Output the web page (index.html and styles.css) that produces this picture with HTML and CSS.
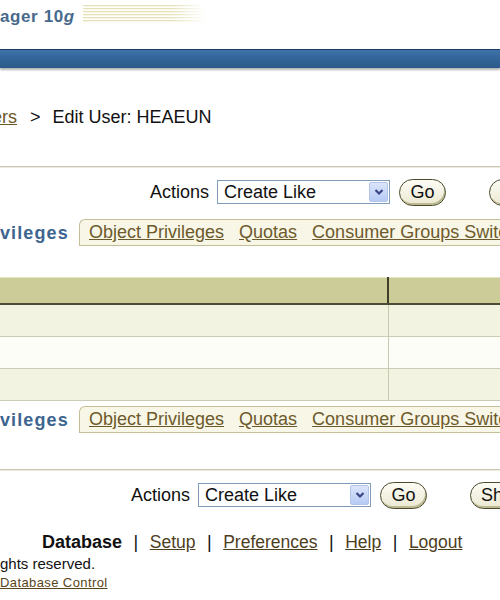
FILE: index.html
```html
<!DOCTYPE html>
<html lang="en">

<head>
    <meta charset="UTF-8">
    <meta name="viewport" content="width=device-width, initial-scale=1.0">
    <title>Edit User: HEAEUN</title>
    <link rel="stylesheet" href="styles.css">
</head>

<body>
    <div class="brand">
        <span class="brand-name">ager 10<i>g</i></span>
        <span class="brand-stripes"></span>
    </div>
    <div class="topbar"></div>

    <div class="crumbs">
        <a href="#">ers</a>
        <span class="crumb-sep">&gt;</span>
        <span>Edit User: HEAEUN</span>
    </div>

    <div class="rule"></div>

    <div class="actions actions-top">
        <label>Actions</label>
        <div class="select-box">
            <span>Create Like</span>
            <span class="select-arrow">
                <svg width="10" height="8" viewBox="0 0 10 8"><path d="M1.5 2 L5 5.5 L8.5 2" fill="none" stroke="#3b4487" stroke-width="2.2"/></svg>
            </span>
        </div>
        <button class="pill">Go</button>
        <button class="pill wide">Revert</button>
    </div>

    <div class="tabs">
        <span class="tab-current">vileges</span>
        <div class="tab-strip">
            <a href="#">Object Privileges</a>
            <a href="#">Quotas</a>
            <a href="#">Consumer Groups Switch</a>
        </div>
    </div>

    <table class="grid">
        <thead>
            <tr><th class="col-a"></th><th></th></tr>
        </thead>
        <tbody>
            <tr class="odd"><td class="col-a"></td><td></td></tr>
            <tr><td class="col-a"></td><td></td></tr>
            <tr class="odd"><td class="col-a"></td><td></td></tr>
        </tbody>
    </table>

    <div class="tabs tabs-bottom">
        <span class="tab-current">vileges</span>
        <div class="tab-strip">
            <a href="#">Object Privileges</a>
            <a href="#">Quotas</a>
            <a href="#">Consumer Groups Switch</a>
        </div>
    </div>

    <div class="rule rule-bottom"></div>

    <div class="actions actions-bottom">
        <label>Actions</label>
        <div class="select-box">
            <span>Create Like</span>
            <span class="select-arrow">
                <svg width="10" height="8" viewBox="0 0 10 8"><path d="M1.5 2 L5 5.5 L8.5 2" fill="none" stroke="#3b4487" stroke-width="2.2"/></svg>
            </span>
        </div>
        <button class="pill">Go</button>
        <button class="pill wide">Show SQL</button>
    </div>

    <div class="footer-links">
        <b>Database</b>
        <span class="sep">|</span>
        <a href="#">Setup</a>
        <span class="sep">|</span>
        <a href="#">Preferences</a>
        <span class="sep">|</span>
        <a href="#">Help</a>
        <span class="sep">|</span>
        <a href="#">Logout</a>
    </div>
    <div class="copyright">ghts reserved.</div>
    <a class="about" href="#">Database Control</a>
</body>

</html>
```

FILE: styles.css
```css
html, body {
    width: 500px;
    overflow: hidden;
}

body {
    margin: 0;
    font-family: "Liberation Sans", Arial, sans-serif;
    font-size: 18px;
    color: #111;
    background: #fff;
}

a {
    color: #6b5628;
}

/* branding strip */
.brand {
    height: 49px;
    display: flex;
    align-items: flex-start;
    box-sizing: border-box;
    padding-top: 5px;
}

.brand-name {
    font-size: 17px;
    font-weight: bold;
    letter-spacing: 0.6px;
    color: #48698c;
    line-height: 20px;
    margin-top: 2px;
    flex: none;
}

.brand-stripes {
    width: 123px;
    height: 17px;
    margin-left: 8px;
    background: repeating-linear-gradient(to bottom, #e4e0b8 0 1px, #f8f6e6 1px 2px, #fff 2px 3px);
    -webkit-mask-image: linear-gradient(to right, #000 70%, transparent);
    mask-image: linear-gradient(to right, #000 70%, transparent);
}

.topbar {
    height: 18px;
    border-top: 1px solid #1b3a63;
    background: linear-gradient(to bottom, #3f72a8, #33669a 40%, #2c5a8a);
    box-shadow: 0 2px 2px rgba(0, 0, 0, 0.3);
}

/* breadcrumb */
.crumbs {
    margin-top: 37px;
    margin-left: -8px;
    line-height: 24px;
    height: 24px;
}

.crumb-sep {
    margin: 0 7px 0 8px;
}

.rule {
    margin-top: 37px;
    border-top: 1px solid #c9c6b3;
    border-bottom: 1px solid #eceadf;
}

.rule-bottom {
    margin-top: 36px;
}

/* action row */
.actions {
    display: flex;
    align-items: center;
    height: 28px;
    margin-top: 10px;
    white-space: nowrap;
}

.actions-top {
    padding-left: 150px;
}

.actions-bottom {
    padding-left: 131px;
}

.actions label {
    margin-right: 8px;
}

.select-box {
    display: flex;
    align-items: center;
    justify-content: space-between;
    flex: none;
    width: 173px;
    height: 24px;
    box-sizing: border-box;
    border: 1px solid #7f9db9;
    padding: 0 1px 0 6px;
    background: #fff;
}

.select-arrow {
    display: flex;
    align-items: center;
    justify-content: center;
    width: 19px;
    height: 20px;
    box-sizing: border-box;
    border: 1px solid #b3c3e6;
    border-radius: 2px;
    background: linear-gradient(to bottom, #dbe5fc, #b7cbf5);
}

.pill {
    flex: none;
    font: inherit;
    color: #111;
    height: 27px;
    width: 47px;
    margin-left: 9px;
    padding: 0;
    border: 1px solid #4a4a2c;
    border-radius: 14px;
    background: linear-gradient(to bottom, #fdfcf5, #ebe8d2);
    box-shadow: inset -1px -2px 0 #bdb993;
}

.pill.wide {
    width: 96px;
    margin-left: 43px;
    text-align: left;
    padding-left: 10px;
}

/* sub tabs */
.tabs {
    display: flex;
    align-items: flex-end;
    height: 28px;
    margin-top: 12px;
    white-space: nowrap;
}

.tabs-bottom {
    margin-top: 4px;
}

.tab-current {
    font-weight: bold;
    letter-spacing: 1.1px;
    color: #3e6590;
    width: 79px;
    line-height: 26px;
    flex: none;
}

.tab-strip {
    flex: none;
    display: flex;
    gap: 15px;
    height: 27px;
    box-sizing: border-box;
    padding: 0 0 0 9px;
    line-height: 25px;
    background: #f8f6e6;
    border: 1px solid #c4bf98;
    border-right: none;
    border-top-left-radius: 6px;
}

.tab-strip a {
    color: #6d5a2c;
}

/* empty privileges table */
.grid {
    margin-top: 31px;
    width: 600px;
    border-collapse: collapse;
}

.grid th {
    height: 25px;
    background: #cccc99;
    border-top: 1px solid #e4e4c4;
    border-bottom: 2px solid #4c4c34;
    padding: 0;
}

.grid th.col-a {
    border-right: 2px solid #3e3e2a;
}

.grid .col-a {
    width: 387px;
}

.grid td {
    height: 31px;
    padding: 0;
    border-bottom: 1px solid #cbcbb6;
    background: #fdfdf8;
}

.grid td.col-a {
    border-right: 1px solid #c9c9b2;
}

.grid tr.odd td {
    background: #f3f3e2;
}

/* footer */
.footer-links {
    display: flex;
    align-items: baseline;
    margin-top: 22px;
    padding-left: 42px;
    line-height: 22px;
    white-space: nowrap;
}

.footer-links a {
    font-size: 17.5px;
    color: #4e3e1e;
}

.footer-links .sep {
    margin: 0 11.5px;
}

.copyright {
    font-size: 15px;
    line-height: 18px;
    margin-top: 2px;
}

.about {
    display: block;
    font-size: 13px;
    letter-spacing: 0.4px;
    line-height: 18px;
    margin-top: 1px;
    color: #5a4520;
}
```
